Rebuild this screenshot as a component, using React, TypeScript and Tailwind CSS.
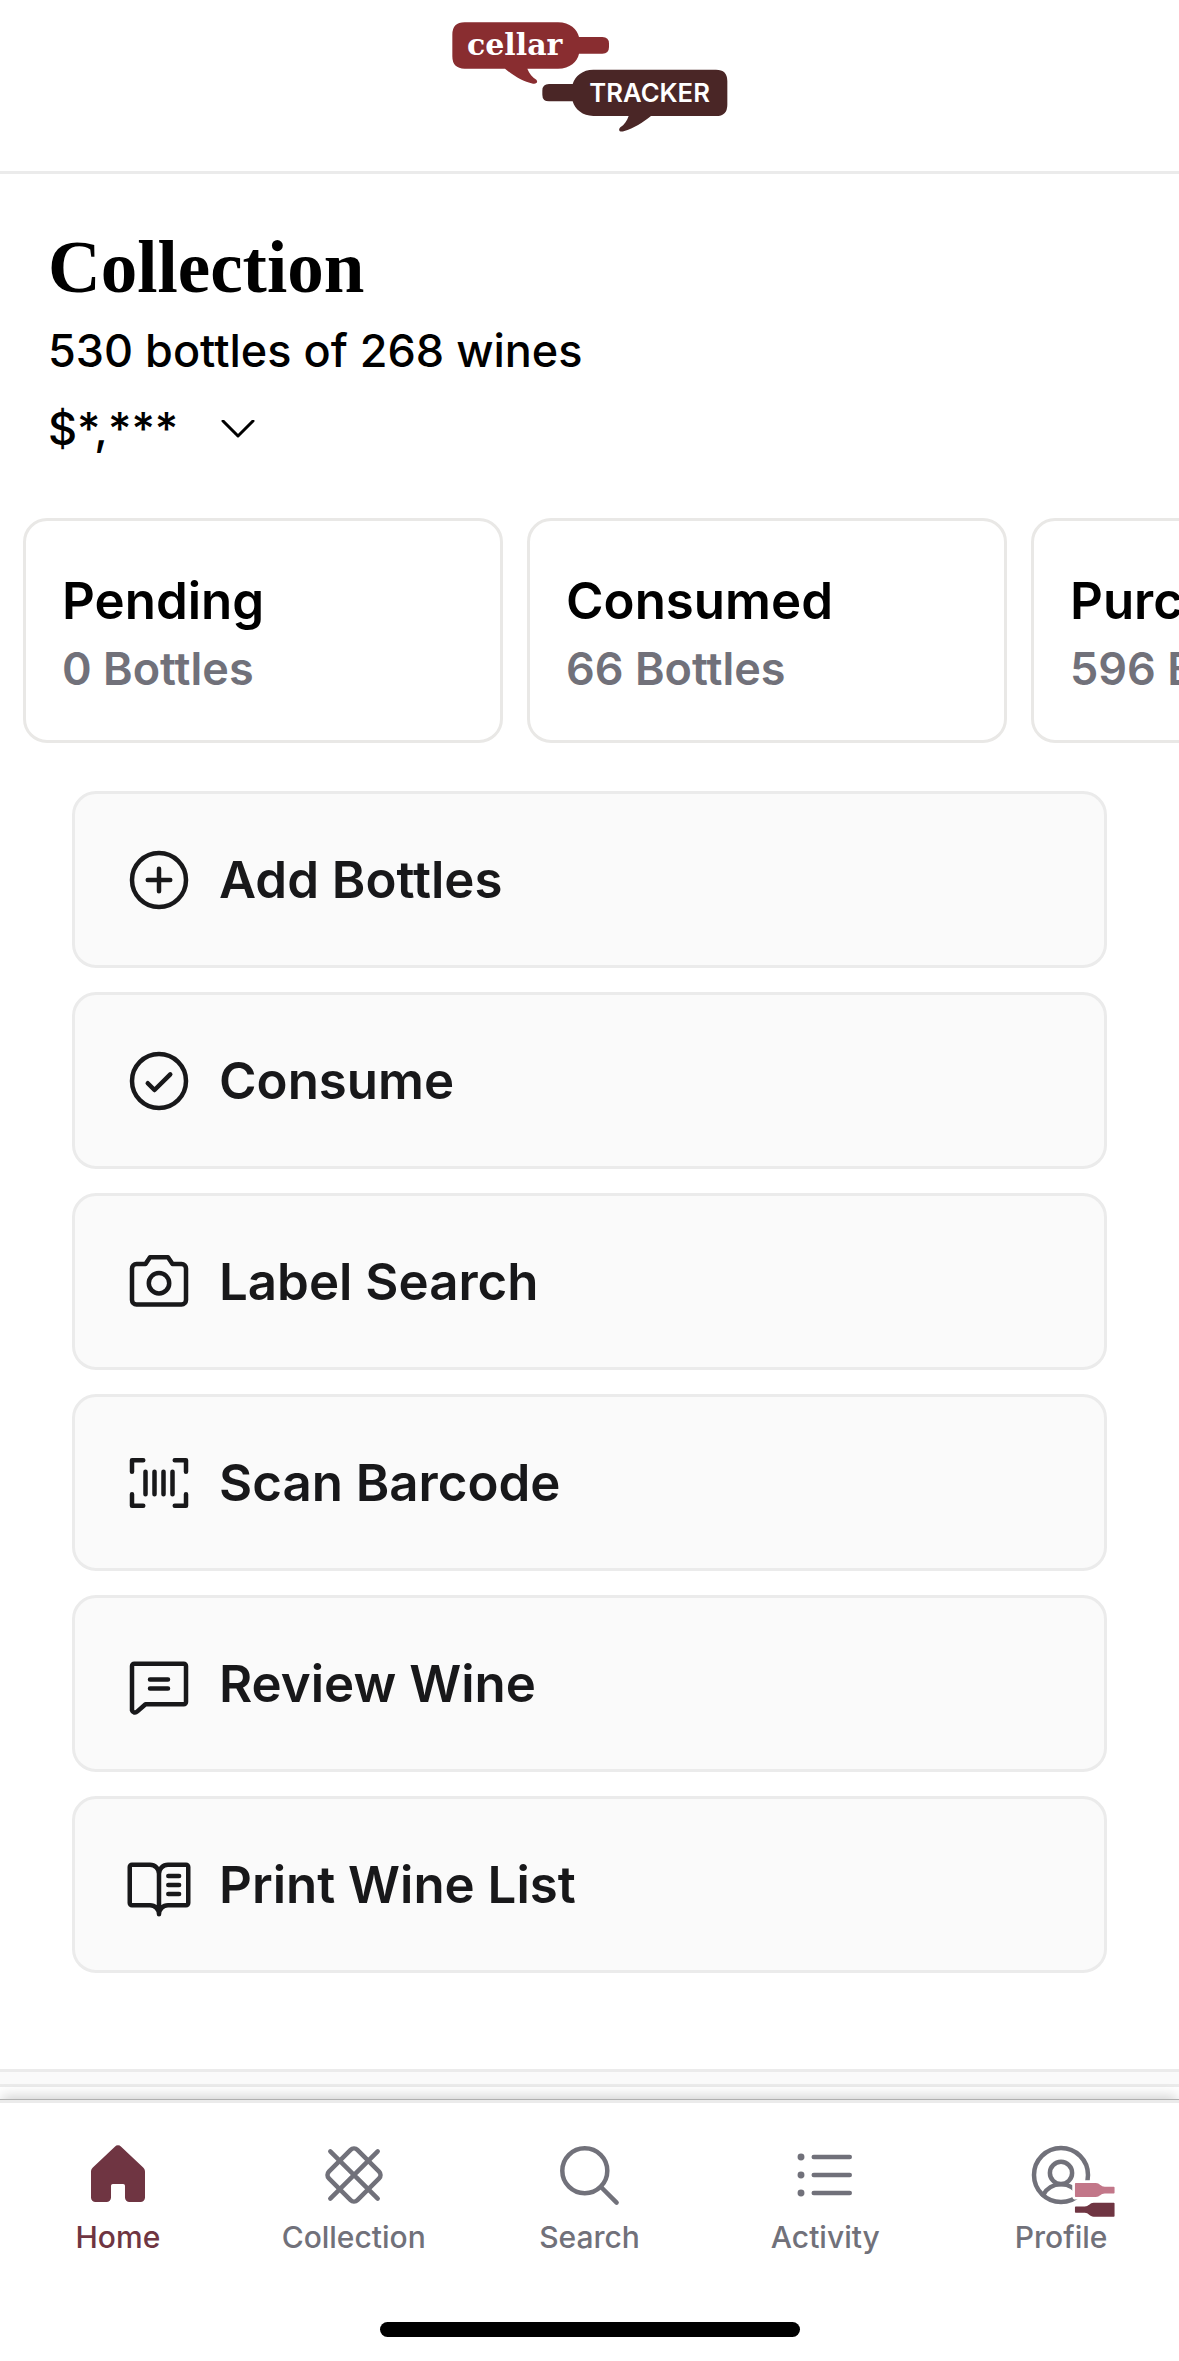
import type { ReactNode } from "react";

type IconProps = {
  children: ReactNode;
};

const Icon = ({ children }: IconProps) => (
  <svg
    className="h-[72px] w-[72px] shrink-0 overflow-visible"
    viewBox="0 0 24 24"
    fill="none"
    stroke="currentColor"
    strokeWidth="1.5"
    strokeLinecap="round"
    strokeLinejoin="round"
    aria-hidden
  >
    {children}
  </svg>
);

const stats = [
  { title: "Pending", count: "0 Bottles" },
  { title: "Consumed", count: "66 Bottles" },
  { title: "Purchased", count: "596 Bottles" },
];

const actions = [
  {
    label: "Add Bottles",
    icon: (
      <Icon>
        <circle cx="12" cy="12" r="9" />
        <path d="M8.25 12h7.5M12 8.25v7.5" />
      </Icon>
    ),
  },
  {
    label: "Consume",
    icon: (
      <Icon>
        <circle cx="12" cy="12" r="9" />
        <path d="M8.25 12.75 10.5 15l5.25-5.2" />
      </Icon>
    ),
  },
  {
    label: "Label Search",
    icon: (
      <Icon>
        <path d="M19.5 19.5h-15A1.5 1.5 0 0 1 3 18V7.5A1.5 1.5 0 0 1 4.5 6h3L9 3.75h6L16.5 6h3A1.5 1.5 0 0 1 21 7.5V18a1.5 1.5 0 0 1-1.5 1.5Z" />
        <circle cx="12" cy="12.4" r="3.4" />
      </Icon>
    ),
  },
  {
    label: "Scan Barcode",
    icon: (
      <Icon>
        <path d="M6.75 4.4H3v3.85M17.25 4.4H21v3.85M6.75 19.6H3v-3.85M17.25 19.6H21v-3.85" />
        <path d="M7.5 8.25v7.5M10.5 8.25v7.5M13.5 8.25v7.5M16.5 8.25v7.5" />
      </Icon>
    ),
  },
  {
    label: "Review Wine",
    icon: (
      <Icon>
        <path d="m7.5 18.75-2.8 2.45A1 1 0 0 1 3 20.8V6a.75.75 0 0 1 .75-.75h16.5A.75.75 0 0 1 21 6v12a.75.75 0 0 1-.75.75Z" />
        <path d="M9 10.5h6M9 13.5h6" />
      </Icon>
    ),
  },
  {
    label: "Print Wine List",
    icon: (
      <Icon>
        <path d="M12 8.25a3 3 0 0 1 3-3h6a.75.75 0 0 1 .75.75v12a.75.75 0 0 1-.75.75h-6a3 3 0 0 0-3 3 3 3 0 0 0-3-3H3a.75.75 0 0 1-.75-.75V6A.75.75 0 0 1 3 5.25h6a3 3 0 0 1 3 3Zm0 0v13.3" />
        <path d="M15.1 9h3.6M15.1 12h3.6M15.1 15h3.6" />
      </Icon>
    ),
  },
];

const tabs = [
  {
    label: "Home",
    active: true,
    icon: (
      <Icon>
        <path
          d="M3 10.9c0-.6.25-1.1.7-1.5l7.25-6.85a1.5 1.5 0 0 1 2.1 0L20.3 9.4c.45.4.7.9.7 1.5v8.6a1.5 1.5 0 0 1-1.5 1.5h-3.67a1.5 1.5 0 0 1-1.5-1.5v-3.9a.6.6 0 0 0-.6-.6h-3.46a.6.6 0 0 0-.6.6v3.9a1.5 1.5 0 0 1-1.5 1.5H4.5A1.5 1.5 0 0 1 3 19.5Z"
          fill="currentColor"
          stroke="none"
        />
      </Icon>
    ),
  },
  {
    label: "Collection",
    active: false,
    icon: (
      <Icon>
        <rect x="5.28" y="5.28" width="13.44" height="13.44" rx="1.6" transform="rotate(45 12 12)" />
        <path d="m4.1 4.1 15.8 15.8M19.9 4.1 4.1 19.9" />
      </Icon>
    ),
  },
  {
    label: "Search",
    active: false,
    icon: (
      <Icon>
        <circle cx="10.6" cy="10.6" r="7.5" />
        <path d="M16 16l5.2 5.2" />
      </Icon>
    ),
  },
  {
    label: "Activity",
    active: false,
    icon: (
      <Icon>
        <path d="M8.25 6h12M8.25 12h12M8.25 18h12" />
        <g fill="currentColor" stroke="none">
          <circle cx="4" cy="6" r="1.15" />
          <circle cx="4" cy="12" r="1.15" />
          <circle cx="4" cy="18" r="1.15" />
        </g>
      </Icon>
    ),
  },
  {
    label: "Profile",
    active: false,
    icon: (
      <Icon>
        <circle cx="12" cy="12" r="9" />
        <circle cx="12" cy="11.3" r="3.7" />
        <path d="M6 18.7a6.8 6.8 0 0 1 12 0" />
        {/* pair of bottles sitting over the avatar */}
        <g stroke="#fff" strokeWidth="1.8" paintOrder="stroke">
          <path
            d="M16.9 14.65h6.7c1.3 0 1.7 1.25 3 1.25h3c.15 0 .25.1.25.25V17.9c0 .15-.1.25-.25.25h-3c-1.3 0-1.7 1.15-3 1.15h-6.7a.25.25 0 0 1-.25-.25V14.9c0-.15.1-.25.25-.25Z"
            fill="#c27789"
          />
          <path
            d="M29.6 21.25h-6.7c-1.3 0-1.7 1.25-3 1.25h-3c-.15 0-.25.1-.25.25v1.6c0 .15.1.25.25.25h3c1.3 0 1.7 1.3 3 1.3h6.7c.15 0 .25-.1.25-.25V21.5a.25.25 0 0 0-.25-.25Z"
            fill="#6f3542"
          />
        </g>
      </Icon>
    ),
  },
];

const Logo = () => (
  <svg className="h-[110px] w-[276px]" viewBox="66 66 828 330" role="img" aria-label="CellarTracker">
    <path
      d="M104 67h280c36 0 58 22 63 44h70q20 0 20 20v10q0 20-20 20h-70c-5 24-27 45-63 45h-92c6 15 15 26 27 33 6 7 0 14-10 12-30-6-58-23-84-45H104q-37 0-37-37v-65q0-37 37-37Z"
      fill="#892d30"
    />
    <path
      d="M490 209h368q34 0 34 34v71q0 34-34 34H663c-26 20-50 36-82 46-12 3-18-4-10-12 12-8 20-19 25-34H490c-32 0-55-20-62-44h-71q-20 0-20-20v-12q0-20 20-20h71c7-24 30-43 62-43Z"
      fill="#4a2626"
    />
    <text x="111" y="165" fill="#fff" fontSize="90" fontWeight="700" fontFamily="'DejaVu Serif', serif">
      cellar
    </text>
    <text x="478" y="306" fill="#fff" fontSize="77" fontWeight="600" fontFamily="Inter, sans-serif">
      TRACKER
    </text>
  </svg>
);

const App = () => (
  <div className="flex min-h-screen flex-col overflow-x-hidden bg-white font-['Inter',sans-serif] text-black">
    <header className="flex justify-center border-b-[3px] border-[#ebebeb] pb-[39px] pt-[22px]">
      <Logo />
    </header>

    <main className="flex flex-1 flex-col">
      <section className="px-12 pt-[51px]">
        <h1 className="font-['Liberation_Serif',serif] text-[73px] font-bold leading-[86px]">Collection</h1>
        <p className="mt-2.5 text-[45px] font-medium leading-[60px]">530 bottles of 268 wines</p>
        <button type="button" className="mt-[18px] flex items-center gap-[42px] text-[45px] font-medium leading-[60px]">
          $*,***
          <svg
            className="h-[18px] w-9"
            viewBox="0 0 36 18"
            fill="none"
            stroke="currentColor"
            strokeWidth="3"
            strokeLinecap="round"
            strokeLinejoin="round"
            aria-hidden
          >
            <path d="m3 1 15 15L33 1" />
          </svg>
        </button>
      </section>

      <section className="flex gap-6 overflow-hidden pl-[23px] pt-[59px]">
        {stats.map((stat) => (
          <a
            key={stat.title}
            href="#"
            className="w-[480px] shrink-0 rounded-3xl border-[3px] border-[#e9e8e6] px-9 pb-10 pt-[42px] font-semibold"
          >
            <h2 className="text-[51px] leading-[75px]">{stat.title}</h2>
            <p className="text-[45px] leading-[62px] text-[#71717a]">{stat.count}</p>
          </a>
        ))}
      </section>

      <section className="flex flex-col gap-6 px-[72px] pb-24 pt-12">
        {actions.map((action) => (
          <button
            key={action.label}
            type="button"
            className="flex h-[177px] items-center gap-6 rounded-3xl border-[3px] border-[#ebebeb] bg-[#fafafa] px-12 text-[51px] font-semibold leading-[76px] text-[#18181a]"
          >
            {action.icon}
            {action.label}
          </button>
        ))}
      </section>

      <div className="flex-1 border-t-[3px] border-[#ebebeb] bg-[#fafafa] pt-3">
        <div className="h-full min-h-4 border-t-[3px] border-[#ebebeb] bg-white" />
      </div>
    </main>

    <nav className="relative border-t-[3px] border-[#ebebeb] bg-white pb-6 pt-9 shadow-[0_-1px_0_#b0b0b0,0_-6px_12px_-2px_rgba(0,0,0,0.18)]">
      <div className="grid grid-cols-5">
        {tabs.map((tab) => (
          <a
            key={tab.label}
            href="#"
            aria-current={tab.active ? "page" : undefined}
            className={`flex flex-col items-center gap-1.5 text-[30px] font-medium leading-10 ${tab.active ? "text-[#6f3542]" : "text-[#71717a]"}`}
          >
            {tab.icon}
            {tab.label}
          </a>
        ))}
      </div>
      <div className="mx-auto mt-[65px] h-[15px] w-[420px] rounded-full bg-black" />
    </nav>
  </div>
);

export default App;
